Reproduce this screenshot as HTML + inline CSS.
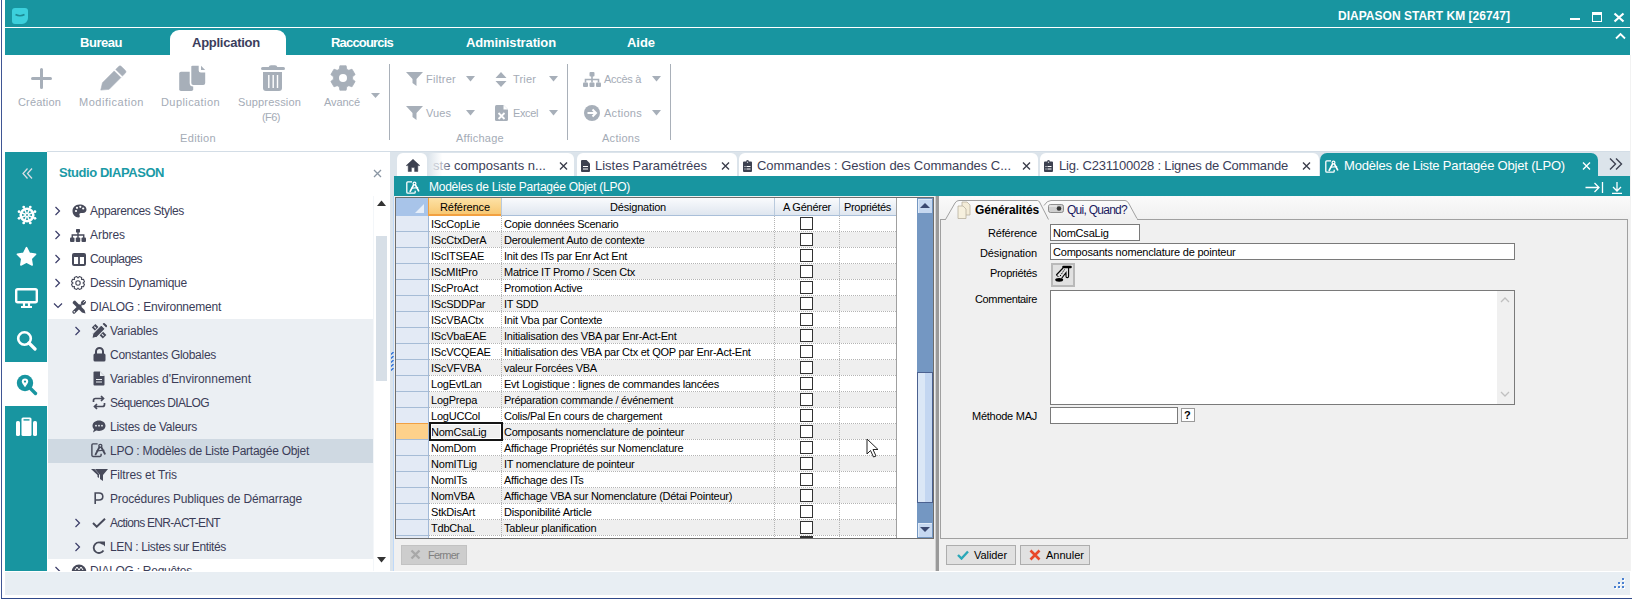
<!DOCTYPE html>
<html><head><meta charset="utf-8"><style>
html,body{margin:0;padding:0}
body{width:1632px;height:599px;overflow:hidden;position:relative;background:#fff;font-family:"Liberation Sans", sans-serif}
body>div,body>svg{position:absolute;white-space:pre}
</style></head><body>
<div style="left:1px;top:0px;width:1px;height:599px;background:#3f5694;"></div>
<div style="left:1px;top:598px;width:1631px;height:1px;background:#30498a;"></div>
<div style="left:5px;top:0px;width:1625px;height:27px;background:#1895a0;"></div>
<div style="left:5px;top:28px;width:1625px;height:27px;background:#1895a0;"></div>
<div style="left:12px;top:8px;width:16px;height:16px;background:#3cd0dc;border-radius:3px 3px 6px 3px"></div>
<svg style="left:14px;top:13px;" width="12" height="5" viewBox="0 0 12 5"><path d="M1.5 1.5 Q6 4 10.5 1.5" stroke="#1d8a94" stroke-width="1.6" fill="none"/></svg>
<div style="left:1338.00px;top:9px;font-size:12px;line-height:14px;font-weight:700;color:#fff;letter-spacing:0.016px;">DIAPASON START KM [26747]</div>
<div style="left:1570px;top:18px;width:10px;height:2px;background:#fff;"></div>
<div style="left:1592px;top:12px;width:8px;height:6px;border:1px solid #fff;border-top-width:3px"></div>
<svg style="left:1613px;top:12px;" width="12" height="11" viewBox="0 0 12 11"><path d="M1.5 1.5 L10.5 9.5 M10.5 1.5 L1.5 9.5" stroke="#fff" stroke-width="2.2"/></svg>
<svg style="left:1615px;top:32px;" width="12" height="8" viewBox="0 0 12 8"><path d="M1 6.5 L5.5 2 L10 6.5" stroke="#fff" stroke-width="1.8" fill="none"/></svg>
<div style="left:170px;top:30px;width:116px;height:25px;background:#fff;border-radius:9px 9px 0 0"></div>
<div style="left:80.00px;top:35px;font-size:13px;line-height:15px;font-weight:700;color:#fff;letter-spacing:-0.466px;">Bureau</div>
<div style="left:192.00px;top:35px;font-size:13px;line-height:15px;font-weight:700;color:#3b3d5c;letter-spacing:-0.253px;">Application</div>
<div style="left:331.00px;top:35px;font-size:13px;line-height:15px;font-weight:700;color:#fff;letter-spacing:-0.809px;">Raccourcis</div>
<div style="left:466.00px;top:35px;font-size:13px;line-height:15px;font-weight:700;color:#fff;letter-spacing:-0.124px;">Administration</div>
<div style="left:627.00px;top:35px;font-size:13px;line-height:15px;font-weight:700;color:#fff;letter-spacing:-0.043px;">Aide</div>
<svg style="left:31px;top:68px;" width="21" height="21" viewBox="0 0 21 21"><path d="M10.5 1.5 V19.5 M1.5 10.5 H19.5" stroke="#a7afb9" stroke-width="3" stroke-linecap="round"/></svg>
<div style="left:18.00px;top:96px;font-size:11px;line-height:12px;font-weight:400;color:#a4abb6;letter-spacing:0.178px;">Création</div>
<svg style="left:100px;top:64px;" width="28" height="28" viewBox="0 0 28 28"><g transform="translate(0.3 1.2) scale(0.94)"><path d="M0.5 26.5 L2.3 18.6 L14.8 6.1 L21.9 13.2 L9.4 25.7 Z M16.4 4.5 L19.6 1.3 Q21 0 22.4 1.3 L26.7 5.6 Q28 7 26.7 8.4 L23.5 11.6 Z" fill="#a7afb9" stroke="#a7afb9" stroke-width="0.6" stroke-linejoin="round"/></g></svg>
<div style="left:79.00px;top:96px;font-size:11px;line-height:12px;font-weight:400;color:#a4abb6;letter-spacing:0.525px;">Modification</div>
<svg style="left:178px;top:65px;" width="28" height="27" viewBox="0 0 28 27"><rect x="1.2" y="6.8" width="14" height="19.2" rx="1.8" fill="#a7afb9"/><path d="M14.5 0 H21.5 V5.5 Q21.5 6.8 22.8 6.8 H28 V18 Q28 20.8 25.2 20.8 H15.3 Q12.5 20.8 12.5 18 V2 Q12.5 0 14.5 0 Z" fill="#a7afb9" stroke="#fff" stroke-width="1.6"/><path d="M23 0.8 L27.2 5 H23 Z" fill="#a7afb9"/></svg>
<div style="left:161.00px;top:96px;font-size:11px;line-height:12px;font-weight:400;color:#a4abb6;letter-spacing:0.416px;">Duplication</div>
<svg style="left:261px;top:65px;" width="24" height="26" viewBox="0 0 24 26"><path d="M1.5 3.5 H22.5" stroke="#a7afb9" stroke-width="3" stroke-linecap="round"/><path d="M7.5 2.5 Q8 0.3 10 0.3 H14 Q16 0.3 16.5 2.5 Z" fill="#a7afb9"/><path d="M2 7 H21 V23 Q21 26 18 26 H5 Q2 26 2 23 Z" fill="#a7afb9"/><path d="M7.8 10 V23 M12.2 10 V23 M16.5 10 V23" stroke="#fff" stroke-width="1.4"/></svg>
<div style="left:238.00px;top:96px;font-size:11px;line-height:12px;font-weight:400;color:#a4abb6;letter-spacing:0.168px;">Suppression</div>
<div style="left:262.00px;top:111px;font-size:11px;line-height:12px;font-weight:400;color:#a4abb6;letter-spacing:-0.543px;">(F6)</div>
<svg style="left:330px;top:65px;" width="26" height="26" viewBox="0 0 26 26"><path d="M9.26 4.16 L9.88 0.79 L16.12 0.79 L16.74 4.16 L17.28 4.41 L17.80 4.69 L18.30 5.00 L18.79 5.34 L22.01 4.20 L25.13 9.60 L22.53 11.82 L22.58 12.41 L22.60 13.00 L22.58 13.59 L22.53 14.18 L25.13 16.40 L22.01 21.80 L18.79 20.66 L18.30 21.00 L17.80 21.31 L17.28 21.59 L16.74 21.84 L16.12 25.21 L9.88 25.21 L9.26 21.84 L8.72 21.59 L8.20 21.31 L7.70 21.00 L7.21 20.66 L3.99 21.80 L0.87 16.40 L3.47 14.18 L3.42 13.59 L3.40 13.00 L3.42 12.41 L3.47 11.82 L0.87 9.60 L3.99 4.20 L7.21 5.34 L7.70 5.00 L8.20 4.69 L8.72 4.41 Z" fill="#a7afb9" stroke="#a7afb9" stroke-width="0.8" stroke-linejoin="round"/><circle cx="13" cy="13" r="4" fill="#fff"/></svg>
<div style="left:324.00px;top:96px;font-size:11px;line-height:12px;font-weight:400;color:#a4abb6;letter-spacing:-0.083px;">Avancé</div>
<svg style="left:371px;top:93px;" width="10" height="5" viewBox="0 0 10 5"><path d="M0 0 H9 L4.5 5 Z" fill="#a7afb9"/></svg>
<div style="left:180.00px;top:132px;font-size:11px;line-height:12px;font-weight:400;color:#a4abb6;letter-spacing:0.337px;">Edition</div>
<div style="left:389px;top:64px;width:1px;height:76px;background:#a9b0b9;"></div>
<svg style="left:406px;top:72px;" width="17" height="14" viewBox="0 0 17 14"><path d="M0 0 H17 L10.5 7 V14 L6.5 11 V7 Z" fill="#a7afb9"/></svg>
<div style="left:426.00px;top:73px;font-size:11px;line-height:12px;font-weight:400;color:#a4abb6;letter-spacing:0.270px;">Filtrer</div>
<svg style="left:466px;top:76px;" width="10" height="6" viewBox="0 0 10 6"><path d="M0 0 H9 L4.5 5.5 Z" fill="#a7afb9"/></svg>
<svg style="left:495px;top:72px;" width="12" height="15" viewBox="0 0 12 15"><path d="M6 0 L11.5 6 H0.5 Z M6 15 L11.5 9 H0.5 Z" fill="#a7afb9"/></svg>
<div style="left:513.00px;top:73px;font-size:11px;line-height:12px;font-weight:400;color:#a4abb6;letter-spacing:0.159px;">Trier</div>
<svg style="left:549px;top:76px;" width="10" height="6" viewBox="0 0 10 6"><path d="M0 0 H9 L4.5 5.5 Z" fill="#a7afb9"/></svg>
<svg style="left:406px;top:106px;" width="17" height="14" viewBox="0 0 17 14"><path d="M0 0 H17 L10.5 7 V14 L6.5 11 V7 Z" fill="#a7afb9"/></svg>
<div style="left:426.00px;top:107px;font-size:11px;line-height:12px;font-weight:400;color:#a4abb6;letter-spacing:0.082px;">Vues</div>
<svg style="left:466px;top:110px;" width="10" height="6" viewBox="0 0 10 6"><path d="M0 0 H9 L4.5 5.5 Z" fill="#a7afb9"/></svg>
<svg style="left:495px;top:105px;" width="13" height="16" viewBox="0 0 13 16"><path d="M0 1.5 Q0 0 1.5 0 H8.5 L13 4.5 V14.5 Q13 16 11.5 16 H1.5 Q0 16 0 14.5 Z" fill="#a7afb9"/><path d="M8.5 0 V4.5 H13" fill="#fff"/><path d="M3.5 8 L9.5 14 M9.5 8 L3.5 14" stroke="#fff" stroke-width="1.8"/></svg>
<div style="left:513.00px;top:107px;font-size:11px;line-height:12px;font-weight:400;color:#a4abb6;letter-spacing:-0.381px;">Excel</div>
<svg style="left:549px;top:110px;" width="10" height="6" viewBox="0 0 10 6"><path d="M0 0 H9 L4.5 5.5 Z" fill="#a7afb9"/></svg>
<div style="left:456.00px;top:132px;font-size:11px;line-height:12px;font-weight:400;color:#a4abb6;letter-spacing:0.259px;">Affichage</div>
<div style="left:567px;top:64px;width:1px;height:76px;background:#a9b0b9;"></div>
<svg style="left:583px;top:72px;" width="18" height="15" viewBox="0 0 18 15"><rect x="6.5" y="0" width="5" height="4.5" rx="1" fill="#a7afb9"/><rect x="0" y="10.5" width="5" height="4.5" rx="1" fill="#a7afb9"/><rect x="6.5" y="10.5" width="5" height="4.5" rx="1" fill="#a7afb9"/><rect x="13" y="10.5" width="5" height="4.5" rx="1" fill="#a7afb9"/><path d="M9 4 V10.5 M2.5 10.5 V7.5 H15.5 V10.5" stroke="#a7afb9" stroke-width="1.6" fill="none"/></svg>
<div style="left:604.00px;top:73px;font-size:11px;line-height:12px;font-weight:400;color:#a4abb6;letter-spacing:-0.306px;">Accès à</div>
<svg style="left:652px;top:76px;" width="10" height="6" viewBox="0 0 10 6"><path d="M0 0 H9 L4.5 5.5 Z" fill="#a7afb9"/></svg>
<svg style="left:584px;top:105px;" width="16" height="16" viewBox="0 0 16 16"><circle cx="8" cy="8" r="8" fill="#a7afb9"/><path d="M3.5 8 H11.5 M8.5 4.5 L12 8 L8.5 11.5" stroke="#fff" stroke-width="2" fill="none"/></svg>
<div style="left:604.00px;top:107px;font-size:11px;line-height:12px;font-weight:400;color:#a4abb6;letter-spacing:0.275px;">Actions</div>
<svg style="left:652px;top:110px;" width="10" height="6" viewBox="0 0 10 6"><path d="M0 0 H9 L4.5 5.5 Z" fill="#a7afb9"/></svg>
<div style="left:602.00px;top:132px;font-size:11px;line-height:12px;font-weight:400;color:#a4abb6;letter-spacing:0.275px;">Actions</div>
<div style="left:670px;top:64px;width:1px;height:76px;background:#a9b0b9;"></div>
<div style="left:47px;top:151px;width:1583px;height:1px;background:#d3dde6;"></div>
<div style="left:5px;top:152px;width:42px;height:419px;background:#1895a0;"></div>
<div style="left:47px;top:152px;width:343px;height:419px;background:#fff;"></div>
<svg style="left:22px;top:168px;" width="11" height="11" viewBox="0 0 11 11"><path d="M5.5 0.5 L1 5.5 L5.5 10.5 M10 0.5 L5.5 5.5 L10 10.5" stroke="#d9dde3" stroke-width="1.3" fill="none"/></svg>
<svg style="left:17px;top:205px;" width="20" height="20" viewBox="0 0 20 20"><circle cx="10" cy="10" r="6.3" stroke="#fff" stroke-width="2.6" fill="none"/><circle cx="10" cy="10" r="2.3" fill="#fff"/><circle cx="10" cy="10" r="0.9" fill="#1895a0"/><line x1="11.85" y1="10.77" x2="16.01" y2="12.49" stroke="#fff" stroke-width="1.5"/><circle cx="17.95" cy="13.29" r="1.4" fill="#fff"/><line x1="10.77" y1="11.85" x2="12.49" y2="16.01" stroke="#fff" stroke-width="1.5"/><circle cx="13.29" cy="17.95" r="1.4" fill="#fff"/><line x1="9.23" y1="11.85" x2="7.51" y2="16.01" stroke="#fff" stroke-width="1.5"/><circle cx="6.71" cy="17.95" r="1.4" fill="#fff"/><line x1="8.15" y1="10.77" x2="3.99" y2="12.49" stroke="#fff" stroke-width="1.5"/><circle cx="2.05" cy="13.29" r="1.4" fill="#fff"/><line x1="8.15" y1="9.23" x2="3.99" y2="7.51" stroke="#fff" stroke-width="1.5"/><circle cx="2.05" cy="6.71" r="1.4" fill="#fff"/><line x1="9.23" y1="8.15" x2="7.51" y2="3.99" stroke="#fff" stroke-width="1.5"/><circle cx="6.71" cy="2.05" r="1.4" fill="#fff"/><line x1="10.77" y1="8.15" x2="12.49" y2="3.99" stroke="#fff" stroke-width="1.5"/><circle cx="13.29" cy="2.05" r="1.4" fill="#fff"/><line x1="11.85" y1="9.23" x2="16.01" y2="7.51" stroke="#fff" stroke-width="1.5"/><circle cx="17.95" cy="6.71" r="1.4" fill="#fff"/></svg>
<svg style="left:16px;top:246px;" width="21" height="22" viewBox="0 0 21 22"><path d="M10.50 1.60 L13.38 7.24 L19.63 8.23 L15.16 12.71 L16.14 18.97 L10.50 16.10 L4.86 18.97 L5.84 12.71 L1.37 8.23 L7.62 7.24 Z" fill="#fff" stroke="#fff" stroke-width="1.6" stroke-linejoin="round"/></svg>
<svg style="left:15px;top:288px;" width="23" height="20" viewBox="0 0 23 20"><rect x="1.2" y="1.2" width="20.6" height="13" rx="1.5" stroke="#fff" stroke-width="2.4" fill="none"/><path d="M9 15 V18 M14 15 V18 M6 19 H17" stroke="#fff" stroke-width="2.2"/></svg>
<svg style="left:16px;top:330px;" width="21" height="21" viewBox="0 0 21 21"><circle cx="8.5" cy="8.5" r="6.3" stroke="#fff" stroke-width="2.6" fill="none"/><path d="M13 13 L19 19" stroke="#fff" stroke-width="3.2" stroke-linecap="round"/></svg>
<div style="left:5px;top:362px;width:42px;height:44px;background:#fff;"></div>
<svg style="left:15px;top:373px;" width="23" height="23" viewBox="0 0 23 23"><circle cx="10" cy="10" r="8.2" fill="#1895a0"/><path d="M15.5 15.5 L20.5 20.5" stroke="#1895a0" stroke-width="3.4" stroke-linecap="round"/><path d="M10 14.2 Q6.8 10.5 6.8 8.6 A3.2 3.2 0 0 1 13.2 8.6 Q13.2 10.5 10 14.2 Z" fill="#fff"/><circle cx="10" cy="8.6" r="1.1" fill="#1895a0"/></svg>
<svg style="left:16px;top:417px;" width="21" height="19" viewBox="0 0 21 19"><rect x="0" y="4" width="4" height="15" rx="1.6" fill="#fff"/><rect x="17" y="4" width="4" height="15" rx="1.6" fill="#fff"/><rect x="5.5" y="0.5" width="10" height="18.5" rx="1.5" fill="#fff"/><rect x="7.5" y="2.2" width="6" height="1.4" fill="#1895a0"/></svg>
<div style="left:59.00px;top:165px;font-size:13px;line-height:15px;font-weight:700;color:#1a9aa6;letter-spacing:-0.447px;">Studio DIAPASON</div>
<svg style="left:373px;top:169px;" width="9" height="9" viewBox="0 0 9 9"><path d="M1 1 L8 8 M8 1 L1 8" stroke="#8a96a3" stroke-width="1.3"/></svg>
<div style="left:48px;top:319px;width:325px;height:240px;background:#ebeff3;"></div>
<div style="left:48px;top:439px;width:325px;height:24px;background:#cfd9e2;"></div>
<svg style="left:54px;top:206px;" width="7" height="10" viewBox="0 0 7 10"><path d="M1.5 1 L5.5 5 L1.5 9" stroke="#3a3c68" stroke-width="1.2" fill="none"/></svg>
<div style="left:90.00px;top:204px;font-size:12px;line-height:14px;font-weight:400;color:#3b3d58;letter-spacing:-0.357px;">Apparences Styles</div>
<svg style="left:54px;top:230px;" width="7" height="10" viewBox="0 0 7 10"><path d="M1.5 1 L5.5 5 L1.5 9" stroke="#3a3c68" stroke-width="1.2" fill="none"/></svg>
<div style="left:90.00px;top:228px;font-size:12px;line-height:14px;font-weight:400;color:#3b3d58;letter-spacing:-0.057px;">Arbres</div>
<svg style="left:54px;top:254px;" width="7" height="10" viewBox="0 0 7 10"><path d="M1.5 1 L5.5 5 L1.5 9" stroke="#3a3c68" stroke-width="1.2" fill="none"/></svg>
<div style="left:90.00px;top:252px;font-size:12px;line-height:14px;font-weight:400;color:#3b3d58;letter-spacing:-0.597px;">Couplages</div>
<svg style="left:54px;top:278px;" width="7" height="10" viewBox="0 0 7 10"><path d="M1.5 1 L5.5 5 L1.5 9" stroke="#3a3c68" stroke-width="1.2" fill="none"/></svg>
<div style="left:90.00px;top:276px;font-size:12px;line-height:14px;font-weight:400;color:#3b3d58;letter-spacing:-0.232px;">Dessin Dynamique</div>
<svg style="left:53px;top:302px;" width="10" height="7" viewBox="0 0 10 7"><path d="M1 1.5 L5 5.5 L9 1.5" stroke="#3a3c68" stroke-width="1.2" fill="none"/></svg>
<div style="left:90.00px;top:300px;font-size:12px;line-height:14px;font-weight:400;color:#3b3d58;letter-spacing:-0.230px;">DIALOG : Environnement</div>
<svg style="left:74px;top:326px;" width="7" height="10" viewBox="0 0 7 10"><path d="M1.5 1 L5.5 5 L1.5 9" stroke="#3a3c68" stroke-width="1.2" fill="none"/></svg>
<div style="left:110.00px;top:324px;font-size:12px;line-height:14px;font-weight:400;color:#3b3d58;letter-spacing:-0.127px;">Variables</div>
<div style="left:110.00px;top:348px;font-size:12px;line-height:14px;font-weight:400;color:#3b3d58;letter-spacing:-0.285px;">Constantes Globales</div>
<div style="left:110.00px;top:372px;font-size:12px;line-height:14px;font-weight:400;color:#3b3d58;letter-spacing:-0.046px;">Variables d'Environnement</div>
<div style="left:110.00px;top:396px;font-size:12px;line-height:14px;font-weight:400;color:#3b3d58;letter-spacing:-0.608px;">Séquences DIALOG</div>
<div style="left:110.00px;top:420px;font-size:12px;line-height:14px;font-weight:400;color:#3b3d58;letter-spacing:-0.245px;">Listes de Valeurs</div>
<div style="left:110.00px;top:444px;font-size:12px;line-height:14px;font-weight:400;color:#3b3d58;letter-spacing:-0.265px;">LPO : Modèles de Liste Partagée Objet</div>
<div style="left:110.00px;top:468px;font-size:12px;line-height:14px;font-weight:400;color:#3b3d58;letter-spacing:-0.111px;">Filtres et Tris</div>
<div style="left:110.00px;top:492px;font-size:12px;line-height:14px;font-weight:400;color:#3b3d58;letter-spacing:-0.165px;">Procédures Publiques de Démarrage</div>
<svg style="left:74px;top:518px;" width="7" height="10" viewBox="0 0 7 10"><path d="M1.5 1 L5.5 5 L1.5 9" stroke="#3a3c68" stroke-width="1.2" fill="none"/></svg>
<div style="left:110.00px;top:516px;font-size:12px;line-height:14px;font-weight:400;color:#3b3d58;letter-spacing:-0.703px;">Actions ENR-ACT-ENT</div>
<svg style="left:74px;top:542px;" width="7" height="10" viewBox="0 0 7 10"><path d="M1.5 1 L5.5 5 L1.5 9" stroke="#3a3c68" stroke-width="1.2" fill="none"/></svg>
<div style="left:110.00px;top:540px;font-size:12px;line-height:14px;font-weight:400;color:#3b3d58;letter-spacing:-0.363px;">LEN : Listes sur Entités</div>
<svg style="left:54px;top:566px;" width="7" height="10" viewBox="0 0 7 10"><path d="M1.5 1 L5.5 5 L1.5 9" stroke="#3a3c68" stroke-width="1.2" fill="none"/></svg>
<div style="left:90.00px;top:564px;font-size:12px;line-height:14px;font-weight:400;color:#3b3d58;letter-spacing:-0.278px;">DIALOG : Requêtes</div>
<div style="left:373px;top:196px;width:17px;height:375px;background:#fff;box-shadow:inset 1px 0 0 #f3f6f9"></div>
<svg style="left:377px;top:200px;" width="9" height="6" viewBox="0 0 9 6"><path d="M0 6 L4.5 0.5 L9 6 Z" fill="#333"/></svg>
<div style="left:376px;top:236px;width:11px;height:145px;background:#d7dfe7;"></div>
<svg style="left:377px;top:557px;" width="9" height="6" viewBox="0 0 9 6"><path d="M0 0 H9 L4.5 5.5 Z" fill="#333"/></svg>
<div style="left:390px;top:152px;width:4px;height:419px;background:#dce4eb;"></div>
<div style="left:393px;top:196px;width:1px;height:375px;background:#bfd9f8;"></div>
<svg style="left:391px;top:352px;" width="3" height="3" viewBox="0 0 3 3"><path d="M0 2.5 L2.5 0" stroke="#2d6fd6" stroke-width="1.3"/></svg>
<svg style="left:391px;top:356px;" width="3" height="3" viewBox="0 0 3 3"><path d="M0 2.5 L2.5 0" stroke="#2d6fd6" stroke-width="1.3"/></svg>
<svg style="left:391px;top:360px;" width="3" height="3" viewBox="0 0 3 3"><path d="M0 2.5 L2.5 0" stroke="#2d6fd6" stroke-width="1.3"/></svg>
<svg style="left:391px;top:364px;" width="3" height="3" viewBox="0 0 3 3"><path d="M0 2.5 L2.5 0" stroke="#2d6fd6" stroke-width="1.3"/></svg>
<svg style="left:391px;top:368px;" width="3" height="3" viewBox="0 0 3 3"><path d="M0 2.5 L2.5 0" stroke="#2d6fd6" stroke-width="1.3"/></svg>
<div style="left:394px;top:152px;width:1236px;height:24px;background:#dce4eb;"></div>
<div style="left:397px;top:153px;width:30px;height:23px;background:#fff;border-radius:6px 6px 0 0"></div>
<svg style="left:406px;top:159px;" width="14" height="13" viewBox="0 0 14 13"><path d="M7 0.3 L13.8 6.6 H11.8 V12.5 H8.6 V8.6 H5.4 V12.5 H2.2 V6.6 H0.2 Z" fill="#3d4150" stroke="#3d4150" stroke-width="0.5" stroke-linejoin="round"/></svg>
<div style="left:428px;top:153px;width:146px;height:23px;background:#fff;border-radius:6px 6px 0 0"></div>
<div style="left:433.00px;top:158px;font-size:13px;line-height:15px;font-weight:400;color:#3c3e58;letter-spacing:0.014px;">ste composants n...</div>
<div style="left:428px;top:153px;width:24px;height:23px;background:linear-gradient(90deg,#dce4eb,rgba(255,255,255,0.6) 60%,rgba(255,255,255,0))"></div>
<svg style="left:559px;top:162px;" width="9" height="8" viewBox="0 0 9 8"><path d="M1 0.5 L8 7.5 M8 0.5 L1 7.5" stroke="#3a3d4a" stroke-width="1.35"/></svg>
<div style="left:577px;top:153px;width:160px;height:23px;background:#fff;border-radius:6px 6px 0 0"></div>
<svg style="left:581px;top:160px;" width="9" height="12" viewBox="0 0 9 12"><path d="M0 1 Q0 0 1 0 H5.5 L9 3.5 V11 Q9 12 8 12 H1 Q0 12 0 11 Z" fill="#3d4150"/><path d="M2 6.5 H7 M2 9 H7" stroke="#fff" stroke-width="1"/></svg>
<div style="left:595.00px;top:158px;font-size:13px;line-height:15px;font-weight:400;color:#3c3e58;letter-spacing:0.000px;">Listes Paramétrées</div>
<svg style="left:721px;top:162px;" width="9" height="8" viewBox="0 0 9 8"><path d="M1 0.5 L8 7.5 M8 0.5 L1 7.5" stroke="#3a3d4a" stroke-width="1.35"/></svg>
<div style="left:739px;top:153px;width:299px;height:23px;background:#fff;border-radius:6px 6px 0 0"></div>
<svg style="left:743px;top:160px;" width="9" height="12" viewBox="0 0 9 12"><path d="M0 2.5 Q0 1.5 1 1.5 H3 Q3 0 4.5 0 Q6 0 6 1.5 H8 Q9 1.5 9 2.5 V11 Q9 12 8 12 H1 Q0 12 0 11 Z" fill="#3d4150"/><path d="M3.5 1.7 H5.5 L4.5 3 Z" fill="#fff"/><path d="M3.5 6.5 H7.5 M3.5 9 H7.5" stroke="#fff" stroke-width="1"/><rect x="1.5" y="6" width="1" height="1" fill="#fff"/><rect x="1.5" y="8.5" width="1" height="1" fill="#fff"/></svg>
<div style="left:757.00px;top:158px;font-size:13px;line-height:15px;font-weight:400;color:#3c3e58;letter-spacing:-0.028px;">Commandes : Gestion des Commandes C...</div>
<svg style="left:1022px;top:162px;" width="9" height="8" viewBox="0 0 9 8"><path d="M1 0.5 L8 7.5 M8 0.5 L1 7.5" stroke="#3a3d4a" stroke-width="1.35"/></svg>
<div style="left:1040px;top:153px;width:279px;height:23px;background:#fff;border-radius:6px 6px 0 0"></div>
<svg style="left:1044px;top:160px;" width="9" height="12" viewBox="0 0 9 12"><path d="M0 2.5 Q0 1.5 1 1.5 H3 Q3 0 4.5 0 Q6 0 6 1.5 H8 Q9 1.5 9 2.5 V11 Q9 12 8 12 H1 Q0 12 0 11 Z" fill="#3d4150"/><path d="M3.5 1.7 H5.5 L4.5 3 Z" fill="#fff"/><path d="M3.5 6.5 H7.5 M3.5 9 H7.5" stroke="#fff" stroke-width="1"/><rect x="1.5" y="6" width="1" height="1" fill="#fff"/><rect x="1.5" y="8.5" width="1" height="1" fill="#fff"/></svg>
<div style="left:1059.00px;top:158px;font-size:13px;line-height:15px;font-weight:400;color:#3c3e58;letter-spacing:-0.197px;">Lig. C231100028 : Lignes de Commande</div>
<svg style="left:1302px;top:162px;" width="9" height="8" viewBox="0 0 9 8"><path d="M1 0.5 L8 7.5 M8 0.5 L1 7.5" stroke="#3a3d4a" stroke-width="1.35"/></svg>
<div style="left:1320px;top:153px;width:278px;height:23px;background:#1895a0;border-radius:7px 7px 0 0"></div>
<svg style="left:1325px;top:160px;" width="15" height="14" viewBox="0 0 15 14"><g transform="scale(1.0)"><path d="M6 0.8 H1.8 Q0.8 0.8 0.8 1.8 V11.2 Q0.8 12.2 1.8 12.2 H8.2 Q9.2 12.2 9.2 11.2 V9.8" stroke="#fff" stroke-width="1.3" fill="none"/><circle cx="8.5" cy="2.6" r="1.4" stroke="#fff" stroke-width="1.2" fill="none"/><path d="M7.6 3.9 L4.2 10.3 M9.4 3.9 L12.6 9.8" stroke="#fff" stroke-width="1.7" fill="none" stroke-linecap="round"/><path d="M5 7.2 L12.2 6.6" stroke="#fff" stroke-width="1.1"/></g></svg>
<div style="left:1344.00px;top:158px;font-size:13px;line-height:15px;font-weight:400;color:#fff;letter-spacing:-0.179px;">Modèles de Liste Partagée Objet (LPO)</div>
<svg style="left:1582px;top:162px;" width="9" height="8" viewBox="0 0 9 8"><path d="M1 0.5 L8 7.5 M8 0.5 L1 7.5" stroke="#fff" stroke-width="1.35"/></svg>
<svg style="left:1609px;top:158px;" width="14" height="12" viewBox="0 0 14 12"><path d="M1 0.5 L6.5 6 L1 11.5 M7 0.5 L12.5 6 L7 11.5" stroke="#3d4150" stroke-width="1.4" fill="none"/></svg>
<div style="left:394px;top:176px;width:1236px;height:20px;background:#1895a0;"></div>
<svg style="left:406px;top:181px;" width="15" height="14" viewBox="0 0 15 14"><g transform="scale(1.0)"><path d="M6 0.8 H1.8 Q0.8 0.8 0.8 1.8 V11.2 Q0.8 12.2 1.8 12.2 H8.2 Q9.2 12.2 9.2 11.2 V9.8" stroke="#fff" stroke-width="1.3" fill="none"/><circle cx="8.5" cy="2.6" r="1.4" stroke="#fff" stroke-width="1.2" fill="none"/><path d="M7.6 3.9 L4.2 10.3 M9.4 3.9 L12.6 9.8" stroke="#fff" stroke-width="1.7" fill="none" stroke-linecap="round"/><path d="M5 7.2 L12.2 6.6" stroke="#fff" stroke-width="1.1"/></g></svg>
<div style="left:429.00px;top:180px;font-size:12px;line-height:14px;font-weight:400;color:#fff;letter-spacing:-0.247px;">Modèles de Liste Partagée Objet (LPO)</div>
<svg style="left:1585px;top:182px;" width="19" height="11" viewBox="0 0 19 11"><path d="M0.5 5.5 H14 M9.5 1 L14 5.5 L9.5 10 M17.5 0 V11" stroke="#fff" stroke-width="1.3" fill="none"/></svg>
<svg style="left:1611px;top:182px;" width="12" height="12" viewBox="0 0 12 12"><path d="M6 0 V9 M2 5 L6 9 L10 5 M1 11.5 H11" stroke="#fff" stroke-width="1.3" fill="none"/></svg>
<div style="left:394px;top:196px;width:541px;height:375px;background:#f0f0f0;"></div>
<div style="left:395px;top:197px;width:539px;height:342px;background:#fff;box-sizing:border-box;border:1px solid #6d6d6d"></div>
<div style="left:396px;top:198px;width:32px;height:18px;background:#a8c4e9;"></div>
<svg style="left:415px;top:204px;" width="9" height="9" viewBox="0 0 9 9"><path d="M9 0 V9 H0 Z" fill="#e6eef9"/></svg>
<div style="left:428px;top:198px;width:73px;height:18px;box-sizing:border-box;background:linear-gradient(#fde2a6,#f8c873);border-left:1px solid #f2a040;border-bottom:2px solid #f2a040"></div>
<div style="left:501px;top:198px;width:273px;height:18px;box-sizing:border-box;background:linear-gradient(#fafbfd,#dfe6ef);border-left:1px solid #b9cadd;border-bottom:1px solid #a9bfd9"></div>
<div style="left:774px;top:198px;width:65px;height:18px;box-sizing:border-box;background:linear-gradient(#fafbfd,#dfe6ef);border-left:1px solid #b9cadd;border-bottom:1px solid #a9bfd9"></div>
<div style="left:839px;top:198px;width:58px;height:18px;box-sizing:border-box;background:linear-gradient(#fafbfd,#dfe6ef);border-left:1px solid #b9cadd;border-bottom:1px solid #a9bfd9"></div>
<div style="left:896px;top:198px;width:1px;height:340px;background:#a0a0a0"></div>
<div style="left:440.00px;top:201px;font-size:11px;line-height:12px;font-weight:400;color:#000;letter-spacing:-0.085px;">Référence</div>
<div style="left:610.00px;top:201px;font-size:11px;line-height:12px;font-weight:400;color:#000;letter-spacing:-0.190px;">Désignation</div>
<div style="left:783.00px;top:201px;font-size:11px;line-height:12px;font-weight:400;color:#000;letter-spacing:-0.238px;">A Générer</div>
<div style="left:844.00px;top:201px;font-size:11px;line-height:12px;font-weight:400;color:#000;letter-spacing:-0.314px;">Propriétés</div>
<div style="left:429px;top:216px;width:467px;height:15px;background:#ffffff;"></div>
<div style="left:396px;top:216px;width:32px;height:15px;background:#e3eaf5;"></div>
<div style="left:396px;top:231px;width:32px;height:1px;background:#a6bcd6;"></div>
<div style="left:429px;top:231px;width:467px;height:1px;background:repeating-linear-gradient(90deg,#b4b4b4 0 1px,transparent 1px 2px);"></div>
<div style="left:429px;top:232px;width:467px;height:15px;background:#efefef;"></div>
<div style="left:396px;top:232px;width:32px;height:15px;background:#e3eaf5;"></div>
<div style="left:396px;top:247px;width:32px;height:1px;background:#a6bcd6;"></div>
<div style="left:429px;top:247px;width:467px;height:1px;background:repeating-linear-gradient(90deg,#b4b4b4 0 1px,transparent 1px 2px);"></div>
<div style="left:429px;top:248px;width:467px;height:15px;background:#ffffff;"></div>
<div style="left:396px;top:248px;width:32px;height:15px;background:#e3eaf5;"></div>
<div style="left:396px;top:263px;width:32px;height:1px;background:#a6bcd6;"></div>
<div style="left:429px;top:263px;width:467px;height:1px;background:repeating-linear-gradient(90deg,#b4b4b4 0 1px,transparent 1px 2px);"></div>
<div style="left:429px;top:264px;width:467px;height:15px;background:#efefef;"></div>
<div style="left:396px;top:264px;width:32px;height:15px;background:#e3eaf5;"></div>
<div style="left:396px;top:279px;width:32px;height:1px;background:#a6bcd6;"></div>
<div style="left:429px;top:279px;width:467px;height:1px;background:repeating-linear-gradient(90deg,#b4b4b4 0 1px,transparent 1px 2px);"></div>
<div style="left:429px;top:280px;width:467px;height:15px;background:#ffffff;"></div>
<div style="left:396px;top:280px;width:32px;height:15px;background:#e3eaf5;"></div>
<div style="left:396px;top:295px;width:32px;height:1px;background:#a6bcd6;"></div>
<div style="left:429px;top:295px;width:467px;height:1px;background:repeating-linear-gradient(90deg,#b4b4b4 0 1px,transparent 1px 2px);"></div>
<div style="left:429px;top:296px;width:467px;height:15px;background:#efefef;"></div>
<div style="left:396px;top:296px;width:32px;height:15px;background:#e3eaf5;"></div>
<div style="left:396px;top:311px;width:32px;height:1px;background:#a6bcd6;"></div>
<div style="left:429px;top:311px;width:467px;height:1px;background:repeating-linear-gradient(90deg,#b4b4b4 0 1px,transparent 1px 2px);"></div>
<div style="left:429px;top:312px;width:467px;height:15px;background:#ffffff;"></div>
<div style="left:396px;top:312px;width:32px;height:15px;background:#e3eaf5;"></div>
<div style="left:396px;top:327px;width:32px;height:1px;background:#a6bcd6;"></div>
<div style="left:429px;top:327px;width:467px;height:1px;background:repeating-linear-gradient(90deg,#b4b4b4 0 1px,transparent 1px 2px);"></div>
<div style="left:429px;top:328px;width:467px;height:15px;background:#efefef;"></div>
<div style="left:396px;top:328px;width:32px;height:15px;background:#e3eaf5;"></div>
<div style="left:396px;top:343px;width:32px;height:1px;background:#a6bcd6;"></div>
<div style="left:429px;top:343px;width:467px;height:1px;background:repeating-linear-gradient(90deg,#b4b4b4 0 1px,transparent 1px 2px);"></div>
<div style="left:429px;top:344px;width:467px;height:15px;background:#ffffff;"></div>
<div style="left:396px;top:344px;width:32px;height:15px;background:#e3eaf5;"></div>
<div style="left:396px;top:359px;width:32px;height:1px;background:#a6bcd6;"></div>
<div style="left:429px;top:359px;width:467px;height:1px;background:repeating-linear-gradient(90deg,#b4b4b4 0 1px,transparent 1px 2px);"></div>
<div style="left:429px;top:360px;width:467px;height:15px;background:#efefef;"></div>
<div style="left:396px;top:360px;width:32px;height:15px;background:#e3eaf5;"></div>
<div style="left:396px;top:375px;width:32px;height:1px;background:#a6bcd6;"></div>
<div style="left:429px;top:375px;width:467px;height:1px;background:repeating-linear-gradient(90deg,#b4b4b4 0 1px,transparent 1px 2px);"></div>
<div style="left:429px;top:376px;width:467px;height:15px;background:#ffffff;"></div>
<div style="left:396px;top:376px;width:32px;height:15px;background:#e3eaf5;"></div>
<div style="left:396px;top:391px;width:32px;height:1px;background:#a6bcd6;"></div>
<div style="left:429px;top:391px;width:467px;height:1px;background:repeating-linear-gradient(90deg,#b4b4b4 0 1px,transparent 1px 2px);"></div>
<div style="left:429px;top:392px;width:467px;height:15px;background:#efefef;"></div>
<div style="left:396px;top:392px;width:32px;height:15px;background:#e3eaf5;"></div>
<div style="left:396px;top:407px;width:32px;height:1px;background:#a6bcd6;"></div>
<div style="left:429px;top:407px;width:467px;height:1px;background:repeating-linear-gradient(90deg,#b4b4b4 0 1px,transparent 1px 2px);"></div>
<div style="left:429px;top:408px;width:467px;height:15px;background:#ffffff;"></div>
<div style="left:396px;top:408px;width:32px;height:15px;background:#e3eaf5;"></div>
<div style="left:396px;top:423px;width:32px;height:1px;background:#a6bcd6;"></div>
<div style="left:429px;top:423px;width:467px;height:1px;background:repeating-linear-gradient(90deg,#b4b4b4 0 1px,transparent 1px 2px);"></div>
<div style="left:429px;top:424px;width:467px;height:15px;background:#efefef;"></div>
<div style="left:396px;top:424px;width:32px;height:15px;background:#e3eaf5;"></div>
<div style="left:396px;top:439px;width:32px;height:1px;background:#a6bcd6;"></div>
<div style="left:429px;top:439px;width:467px;height:1px;background:repeating-linear-gradient(90deg,#b4b4b4 0 1px,transparent 1px 2px);"></div>
<div style="left:429px;top:440px;width:467px;height:15px;background:#ffffff;"></div>
<div style="left:396px;top:440px;width:32px;height:15px;background:#e3eaf5;"></div>
<div style="left:396px;top:455px;width:32px;height:1px;background:#a6bcd6;"></div>
<div style="left:429px;top:455px;width:467px;height:1px;background:repeating-linear-gradient(90deg,#b4b4b4 0 1px,transparent 1px 2px);"></div>
<div style="left:429px;top:456px;width:467px;height:15px;background:#efefef;"></div>
<div style="left:396px;top:456px;width:32px;height:15px;background:#e3eaf5;"></div>
<div style="left:396px;top:471px;width:32px;height:1px;background:#a6bcd6;"></div>
<div style="left:429px;top:471px;width:467px;height:1px;background:repeating-linear-gradient(90deg,#b4b4b4 0 1px,transparent 1px 2px);"></div>
<div style="left:429px;top:472px;width:467px;height:15px;background:#ffffff;"></div>
<div style="left:396px;top:472px;width:32px;height:15px;background:#e3eaf5;"></div>
<div style="left:396px;top:487px;width:32px;height:1px;background:#a6bcd6;"></div>
<div style="left:429px;top:487px;width:467px;height:1px;background:repeating-linear-gradient(90deg,#b4b4b4 0 1px,transparent 1px 2px);"></div>
<div style="left:429px;top:488px;width:467px;height:15px;background:#efefef;"></div>
<div style="left:396px;top:488px;width:32px;height:15px;background:#e3eaf5;"></div>
<div style="left:396px;top:503px;width:32px;height:1px;background:#a6bcd6;"></div>
<div style="left:429px;top:503px;width:467px;height:1px;background:repeating-linear-gradient(90deg,#b4b4b4 0 1px,transparent 1px 2px);"></div>
<div style="left:429px;top:504px;width:467px;height:15px;background:#ffffff;"></div>
<div style="left:396px;top:504px;width:32px;height:15px;background:#e3eaf5;"></div>
<div style="left:396px;top:519px;width:32px;height:1px;background:#a6bcd6;"></div>
<div style="left:429px;top:519px;width:467px;height:1px;background:repeating-linear-gradient(90deg,#b4b4b4 0 1px,transparent 1px 2px);"></div>
<div style="left:429px;top:520px;width:467px;height:15px;background:#efefef;"></div>
<div style="left:396px;top:520px;width:32px;height:15px;background:#e3eaf5;"></div>
<div style="left:396px;top:535px;width:32px;height:1px;background:#a6bcd6;"></div>
<div style="left:429px;top:535px;width:467px;height:1px;background:repeating-linear-gradient(90deg,#b4b4b4 0 1px,transparent 1px 2px);"></div>
<div style="left:429px;top:536px;width:467px;height:2px;background:#ffffff;"></div>
<div style="left:396px;top:536px;width:32px;height:2px;background:#e3eaf5;"></div>
<div style="left:428px;top:216px;width:1px;height:322px;background:#a2b9d7;"></div>
<div style="left:501px;top:216px;width:1px;height:322px;background:repeating-linear-gradient(180deg,#b4b4b4 0 1px,transparent 1px 2px);"></div>
<div style="left:774px;top:216px;width:1px;height:322px;background:repeating-linear-gradient(180deg,#b4b4b4 0 1px,transparent 1px 2px);"></div>
<div style="left:839px;top:216px;width:1px;height:322px;background:repeating-linear-gradient(180deg,#b4b4b4 0 1px,transparent 1px 2px);"></div>
<div style="left:431.00px;top:218px;font-size:11px;line-height:12px;font-weight:400;color:#000;letter-spacing:-0.197px;">IScCopLie</div>
<div style="left:504.00px;top:218px;font-size:11px;line-height:12px;font-weight:400;color:#000;letter-spacing:-0.274px;">Copie données Scenario</div>
<div style="left:800px;top:217px;width:13px;height:13px;background:#fff;box-sizing:border-box;border:1.5px solid #333"></div>
<div style="left:431.00px;top:234px;font-size:11px;line-height:12px;font-weight:400;color:#000;letter-spacing:-0.201px;">IScCtxDerA</div>
<div style="left:504.00px;top:234px;font-size:11px;line-height:12px;font-weight:400;color:#000;letter-spacing:-0.264px;">Deroulement Auto de contexte</div>
<div style="left:800px;top:233px;width:13px;height:13px;background:#fff;box-sizing:border-box;border:1.5px solid #333"></div>
<div style="left:431.00px;top:250px;font-size:11px;line-height:12px;font-weight:400;color:#000;letter-spacing:-0.214px;">IScITSEAE</div>
<div style="left:504.00px;top:250px;font-size:11px;line-height:12px;font-weight:400;color:#000;letter-spacing:-0.231px;">Init des ITs par Enr Act Ent</div>
<div style="left:800px;top:249px;width:13px;height:13px;background:#fff;box-sizing:border-box;border:1.5px solid #333"></div>
<div style="left:431.00px;top:266px;font-size:11px;line-height:12px;font-weight:400;color:#000;letter-spacing:-0.188px;">IScMItPro</div>
<div style="left:504.00px;top:266px;font-size:11px;line-height:12px;font-weight:400;color:#000;letter-spacing:-0.255px;">Matrice IT Promo / Scen Ctx</div>
<div style="left:800px;top:265px;width:13px;height:13px;background:#fff;box-sizing:border-box;border:1.5px solid #333"></div>
<div style="left:431.00px;top:282px;font-size:11px;line-height:12px;font-weight:400;color:#000;letter-spacing:-0.190px;">IScProAct</div>
<div style="left:504.00px;top:282px;font-size:11px;line-height:12px;font-weight:400;color:#000;letter-spacing:-0.258px;">Promotion Active</div>
<div style="left:800px;top:281px;width:13px;height:13px;background:#fff;box-sizing:border-box;border:1.5px solid #333"></div>
<div style="left:431.00px;top:298px;font-size:11px;line-height:12px;font-weight:400;color:#000;letter-spacing:-0.219px;">IScSDDPar</div>
<div style="left:504.00px;top:298px;font-size:11px;line-height:12px;font-weight:400;color:#000;letter-spacing:-0.299px;">IT SDD</div>
<div style="left:800px;top:297px;width:13px;height:13px;background:#fff;box-sizing:border-box;border:1.5px solid #333"></div>
<div style="left:431.00px;top:314px;font-size:11px;line-height:12px;font-weight:400;color:#000;letter-spacing:-0.212px;">IScVBACtx</div>
<div style="left:504.00px;top:314px;font-size:11px;line-height:12px;font-weight:400;color:#000;letter-spacing:-0.246px;">Init Vba par Contexte</div>
<div style="left:800px;top:313px;width:13px;height:13px;background:#fff;box-sizing:border-box;border:1.5px solid #333"></div>
<div style="left:431.00px;top:330px;font-size:11px;line-height:12px;font-weight:400;color:#000;letter-spacing:-0.224px;">IScVbaEAE</div>
<div style="left:504.00px;top:330px;font-size:11px;line-height:12px;font-weight:400;color:#000;letter-spacing:-0.239px;">Initialisation des VBA par Enr-Act-Ent</div>
<div style="left:800px;top:329px;width:13px;height:13px;background:#fff;box-sizing:border-box;border:1.5px solid #333"></div>
<div style="left:431.00px;top:346px;font-size:11px;line-height:12px;font-weight:400;color:#000;letter-spacing:-0.240px;">IScVCQEAE</div>
<div style="left:504.00px;top:346px;font-size:11px;line-height:12px;font-weight:400;color:#000;letter-spacing:-0.245px;">Initialisation des VBA par Ctx et QOP par Enr-Act-Ent</div>
<div style="left:800px;top:345px;width:13px;height:13px;background:#fff;box-sizing:border-box;border:1.5px solid #333"></div>
<div style="left:431.00px;top:362px;font-size:11px;line-height:12px;font-weight:400;color:#000;letter-spacing:-0.227px;">IScVFVBA</div>
<div style="left:504.00px;top:362px;font-size:11px;line-height:12px;font-weight:400;color:#000;letter-spacing:-0.272px;">valeur Forcées VBA</div>
<div style="left:800px;top:361px;width:13px;height:13px;background:#fff;box-sizing:border-box;border:1.5px solid #333"></div>
<div style="left:431.00px;top:378px;font-size:11px;line-height:12px;font-weight:400;color:#000;letter-spacing:-0.205px;">LogEvtLan</div>
<div style="left:504.00px;top:378px;font-size:11px;line-height:12px;font-weight:400;color:#000;letter-spacing:-0.257px;">Evt Logistique : lignes de commandes lancées</div>
<div style="left:800px;top:377px;width:13px;height:13px;background:#fff;box-sizing:border-box;border:1.5px solid #333"></div>
<div style="left:431.00px;top:394px;font-size:11px;line-height:12px;font-weight:400;color:#000;letter-spacing:-0.209px;">LogPrepa</div>
<div style="left:504.00px;top:394px;font-size:11px;line-height:12px;font-weight:400;color:#000;letter-spacing:-0.278px;">Préparation commande / événement</div>
<div style="left:800px;top:393px;width:13px;height:13px;background:#fff;box-sizing:border-box;border:1.5px solid #333"></div>
<div style="left:431.00px;top:410px;font-size:11px;line-height:12px;font-weight:400;color:#000;letter-spacing:-0.222px;">LogUCCol</div>
<div style="left:504.00px;top:410px;font-size:11px;line-height:12px;font-weight:400;color:#000;letter-spacing:-0.260px;">Colis/Pal En cours de chargement</div>
<div style="left:800px;top:409px;width:13px;height:13px;background:#fff;box-sizing:border-box;border:1.5px solid #333"></div>
<div style="left:431.00px;top:426px;font-size:11px;line-height:12px;font-weight:400;color:#000;letter-spacing:-0.223px;">NomCsaLig</div>
<div style="left:504.00px;top:426px;font-size:11px;line-height:12px;font-weight:400;color:#000;letter-spacing:-0.271px;">Composants nomenclature de pointeur</div>
<div style="left:800px;top:425px;width:13px;height:13px;background:#fff;box-sizing:border-box;border:1.5px solid #333"></div>
<div style="left:431.00px;top:442px;font-size:11px;line-height:12px;font-weight:400;color:#000;letter-spacing:-0.271px;">NomDom</div>
<div style="left:504.00px;top:442px;font-size:11px;line-height:12px;font-weight:400;color:#000;letter-spacing:-0.255px;">Affichage Propriétés sur Nomenclature</div>
<div style="left:800px;top:441px;width:13px;height:13px;background:#fff;box-sizing:border-box;border:1.5px solid #333"></div>
<div style="left:431.00px;top:458px;font-size:11px;line-height:12px;font-weight:400;color:#000;letter-spacing:-0.209px;">NomITLig</div>
<div style="left:504.00px;top:458px;font-size:11px;line-height:12px;font-weight:400;color:#000;letter-spacing:-0.254px;">IT nomenclature de pointeur</div>
<div style="left:800px;top:457px;width:13px;height:13px;background:#fff;box-sizing:border-box;border:1.5px solid #333"></div>
<div style="left:431.00px;top:474px;font-size:11px;line-height:12px;font-weight:400;color:#000;letter-spacing:-0.217px;">NomITs</div>
<div style="left:504.00px;top:474px;font-size:11px;line-height:12px;font-weight:400;color:#000;letter-spacing:-0.246px;">Affichage des ITs</div>
<div style="left:800px;top:473px;width:13px;height:13px;background:#fff;box-sizing:border-box;border:1.5px solid #333"></div>
<div style="left:431.00px;top:490px;font-size:11px;line-height:12px;font-weight:400;color:#000;letter-spacing:-0.264px;">NomVBA</div>
<div style="left:504.00px;top:490px;font-size:11px;line-height:12px;font-weight:400;color:#000;letter-spacing:-0.255px;">Affichage VBA sur Nomenclature (Détai Pointeur)</div>
<div style="left:800px;top:489px;width:13px;height:13px;background:#fff;box-sizing:border-box;border:1.5px solid #333"></div>
<div style="left:431.00px;top:506px;font-size:11px;line-height:12px;font-weight:400;color:#000;letter-spacing:-0.178px;">StkDisArt</div>
<div style="left:504.00px;top:506px;font-size:11px;line-height:12px;font-weight:400;color:#000;letter-spacing:-0.220px;">Disponibilité Article</div>
<div style="left:800px;top:505px;width:13px;height:13px;background:#fff;box-sizing:border-box;border:1.5px solid #333"></div>
<div style="left:431.00px;top:522px;font-size:11px;line-height:12px;font-weight:400;color:#000;letter-spacing:-0.226px;">TdbChaL</div>
<div style="left:504.00px;top:522px;font-size:11px;line-height:12px;font-weight:400;color:#000;letter-spacing:-0.232px;">Tableur planification</div>
<div style="left:800px;top:521px;width:13px;height:13px;background:#fff;box-sizing:border-box;border:1.5px solid #333"></div>
<div style="left:800px;top:536px;width:13px;height:2px;background:#333;"></div>
<div style="left:396px;top:423px;width:32px;height:16px;background:#fdd18b;box-shadow:inset 0 1px 0 #f1a043"></div>
<div style="left:429px;top:422px;width:74px;height:19px;box-sizing:border-box;border:2px solid #151515;box-shadow:inset 0 0 0 1px #fff"></div>
<div style="left:917px;top:198px;width:16px;height:340px;background:#7497c2;"></div>
<div style="left:917px;top:198px;width:16px;height:16px;background:#c6d8f0;box-sizing:border-box;border:1px solid #7497c2;box-shadow:inset 1px 1px 0 #e0ebf8"></div>
<svg style="left:919px;top:202px;" width="12" height="7" viewBox="0 0 12 7"><path d="M1 6 L6 1 L11 6 Z" fill="#3a4870"/></svg>
<div style="left:917px;top:372px;width:16px;height:131px;box-sizing:border-box;border:1px solid #4b6190;background:linear-gradient(90deg,#dbe7f6 0,#dbe7f6 50%,#c3d6f1 50%)"></div>
<div style="left:917px;top:522px;width:16px;height:16px;background:#c6d8f0;box-sizing:border-box;border:1px solid #7497c2;box-shadow:inset 1px 1px 0 #e0ebf8"></div>
<svg style="left:919px;top:526px;" width="12" height="7" viewBox="0 0 12 7"><path d="M1 1 L6 6 L11 1 Z" fill="#3a4870"/></svg>
<div style="left:935px;top:196px;width:4px;height:375px;background:#9a9a9a;box-shadow:inset 1px 0 0 #d0d0d0"></div>
<div style="left:401px;top:545px;width:66px;height:20px;background:#cdcdcd;box-sizing:border-box;border:1px solid #c2c2c2"></div>
<svg style="left:410px;top:549px;" width="11" height="11" viewBox="0 0 11 11"><path d="M1.5 1.5 L9.5 9.5 M9.5 1.5 L1.5 9.5" stroke="#a8a8a8" stroke-width="2.4"/></svg>
<div style="left:428.00px;top:549px;font-size:11px;line-height:12px;font-weight:400;color:#808080;letter-spacing:-0.742px;">Fermer</div>
<svg style="left:866px;top:438px;" width="13" height="20" viewBox="0 0 13 20"><path d="M1 1 V16 L4.5 12.5 L7.5 19 L10 18 L7 11.5 H12 Z" fill="#fff" stroke="#222" stroke-width="1"/></svg>
<div style="left:939px;top:196px;width:691px;height:375px;background:linear-gradient(#fafafa,#f0f0f0 24px,#f0f0f0)"></div>
<div style="left:940px;top:219px;width:688px;height:320px;box-sizing:border-box;border:1px solid #a0a0a0;border-right-color:#a0a0a0"></div>
<svg style="left:944px;top:199px;" width="196" height="22" viewBox="0 0 196 22"><defs><linearGradient id="tg" x1="0" y1="0" x2="0" y2="1"><stop offset="0" stop-color="#fbfbfb"/><stop offset="1" stop-color="#f0f0f0"/></linearGradient></defs>
<path d="M100 6.5 Q103 1.5 107 1.5 H181 Q183 1.5 184.5 4 L193.5 20.5" fill="url(#tg)" stroke="#a0a0a0" stroke-width="1"/>
<rect x="95" y="19.5" width="98" height="3" fill="#f0f0f0"/>
<path d="M1.5 20.5 L11 4 Q12.5 1.5 15 1.5 H93.5 Q94.5 1.5 95.5 3 L104.5 20.5" fill="url(#tg)" stroke="#a0a0a0" stroke-width="1"/>
<rect x="2" y="20" width="102" height="2" fill="#f0f0f0"/></svg>
<svg style="left:957px;top:201px;" width="14" height="18" viewBox="0 0 14 18"><path d="M5 1 H10 L13 4 V14 H5 Z" fill="#f3ecd8" stroke="#b8b0a0" stroke-width="0.8"/><path d="M1 5 H6 L9 8 V17.5 H1 Z" fill="#f6f0de" stroke="#b8b0a0" stroke-width="0.8"/></svg>
<div style="left:975.00px;top:203px;font-size:12px;line-height:14px;font-weight:700;color:#000;letter-spacing:-0.125px;">Généralités</div>
<svg style="left:1048px;top:203px;" width="17" height="11" viewBox="0 0 17 11"><rect x="0.5" y="1.5" width="15" height="8" rx="2" fill="#cfcfcf" stroke="#777" stroke-width="0.8"/><circle cx="11" cy="5.5" r="2.3" fill="#333"/><path d="M1 3 H9" stroke="#fff" stroke-width="0.8"/></svg>
<div style="left:1067.00px;top:203px;font-size:12px;line-height:14px;font-weight:400;color:#1a1a5e;letter-spacing:-0.732px;">Qui, Quand?</div>
<div style="left:988.00px;top:227px;font-size:11px;line-height:12px;font-weight:400;color:#000;letter-spacing:-0.196px;">Référence</div>
<div style="left:980.00px;top:247px;font-size:11px;line-height:12px;font-weight:400;color:#000;letter-spacing:-0.099px;">Désignation</div>
<div style="left:990.00px;top:267px;font-size:11px;line-height:12px;font-weight:400;color:#000;letter-spacing:-0.314px;">Propriétés</div>
<div style="left:975.00px;top:293px;font-size:11px;line-height:12px;font-weight:400;color:#000;letter-spacing:-0.366px;">Commentaire</div>
<div style="left:972.00px;top:410px;font-size:11px;line-height:12px;font-weight:400;color:#000;letter-spacing:-0.261px;">Méthode MAJ</div>
<div style="left:1050px;top:224px;width:90px;height:17px;box-sizing:border-box;border:1px solid #7a7a7a;background:#fff"></div>
<div style="left:1053.00px;top:227px;font-size:11px;line-height:12px;font-weight:400;color:#000;letter-spacing:-0.2px">NomCsaLig</div>
<div style="left:1050px;top:243px;width:465px;height:17px;box-sizing:border-box;border:1px solid #7a7a7a;background:#fff"></div>
<div style="left:1053.00px;top:246px;font-size:11px;line-height:12px;font-weight:400;color:#000;letter-spacing:-0.2px">Composants nomenclature de pointeur</div>
<div style="left:1051px;top:263px;width:24px;height:24px;background:#e1e1e1;box-sizing:border-box;border:2px solid #b9b9b9"></div>
<svg style="left:1051px;top:263px;" width="24" height="24" viewBox="0 0 24 24"><path d="M12.5 4 H19.5" stroke="#000" stroke-width="2.6" stroke-linecap="round"/><path d="M12 5 L5.3 12" stroke="#000" stroke-width="1.1"/><path d="M17.6 5 V13.2 Q17.6 14.6 16.3 14.6 Q15 14.6 15 13.2 V9.6 L10.5 15.5" stroke="#000" stroke-width="1.1" fill="none"/><path d="M13.5 6.5 L8.5 14" stroke="#000" stroke-width="1" stroke-dasharray="1.2 1"/><path d="M5.5 12.5 L7.5 13.5" stroke="#000" stroke-width="1"/><ellipse cx="8.2" cy="16.8" rx="4" ry="1.9" fill="#000"/></svg>
<div style="left:1050px;top:290px;width:465px;height:115px;box-sizing:border-box;border:1px solid #7a7a7a;background:#fff"></div>
<div style="left:1497px;top:291px;width:17px;height:113px;background:#f0f0f0;"></div>
<svg style="left:1500px;top:297px;" width="10" height="6" viewBox="0 0 10 6"><path d="M1 5 L5 1 L9 5" stroke="#c0c0c0" stroke-width="1.3" fill="none"/></svg>
<svg style="left:1500px;top:391px;" width="10" height="6" viewBox="0 0 10 6"><path d="M1 1 L5 5 L9 1" stroke="#c0c0c0" stroke-width="1.3" fill="none"/></svg>
<div style="left:1050px;top:407px;width:128px;height:17px;box-sizing:border-box;border:1px solid #7a7a7a;background:#fff"></div>
<div style="left:1181px;top:408px;width:14px;height:14px;background:#fff;box-sizing:border-box;border:1px solid #9a9a9a"></div>
<div style="left:1184.00px;top:409px;font-size:11px;line-height:12px;font-weight:700;color:#000;">?</div>
<div style="left:946px;top:545px;width:70px;height:20px;box-sizing:border-box;border:1px solid #adadad;background:#e1e1e1"></div>
<svg style="left:957px;top:550px;" width="12" height="10" viewBox="0 0 12 10"><path d="M1 5 L4.5 8.5 L11 1.5" stroke="#2aa8b8" stroke-width="2.4" fill="none"/></svg>
<div style="left:974.00px;top:549px;font-size:11px;line-height:12px;font-weight:400;color:#000;letter-spacing:-0.062px;">Valider</div>
<div style="left:1020px;top:545px;width:70px;height:20px;box-sizing:border-box;border:1px solid #adadad;background:#e1e1e1"></div>
<svg style="left:1029px;top:549px;" width="12" height="12" viewBox="0 0 12 12"><path d="M1.5 1.5 L10.5 10.5 M10.5 1.5 L1.5 10.5" stroke="#e8482a" stroke-width="2.6"/></svg>
<div style="left:1046.00px;top:549px;font-size:11px;line-height:12px;font-weight:400;color:#000;letter-spacing:0.011px;">Annuler</div>
<div style="left:5px;top:572px;width:1625px;height:23px;background:#e8eef3;"></div>
<div style="left:1614px;top:586px;width:2px;height:2px;background:#4a80d0;box-shadow:1px 1px 0 #fff"></div>
<div style="left:1618px;top:586px;width:2px;height:2px;background:#4a80d0;box-shadow:1px 1px 0 #fff"></div>
<div style="left:1622px;top:586px;width:2px;height:2px;background:#4a80d0;box-shadow:1px 1px 0 #fff"></div>
<div style="left:1618px;top:582px;width:2px;height:2px;background:#4a80d0;box-shadow:1px 1px 0 #fff"></div>
<div style="left:1622px;top:582px;width:2px;height:2px;background:#4a80d0;box-shadow:1px 1px 0 #fff"></div>
<div style="left:1622px;top:578px;width:2px;height:2px;background:#4a80d0;box-shadow:1px 1px 0 #fff"></div>
<svg style="left:72px;top:204px;" width="15" height="14" viewBox="0 0 15 14"><path d="M7.5 0.5 C3 0.5 0.5 3.5 0.5 7 C0.5 10.5 3 13.5 6.5 13.5 C8 13.5 8 12 7.5 11 C7 10 7.5 9 9 9 H11 C13 9 14.5 7.5 14.5 5.5 C14.5 2.5 11.5 0.5 7.5 0.5 Z" fill="#474a5a"/><circle cx="4" cy="7" r="1.1" fill="#fff"/><circle cx="5" cy="3.8" r="1.1" fill="#fff"/><circle cx="8.3" cy="2.8" r="1.1" fill="#fff"/><circle cx="11.2" cy="4.5" r="1.1" fill="#fff"/></svg>
<svg style="left:70px;top:229px;" width="16" height="13" viewBox="0 0 16 13"><rect x="6" y="0" width="4" height="3.5" rx="0.6" fill="#474a5a"/><rect x="0" y="8.5" width="4.5" height="4.5" rx="1" fill="#474a5a"/><rect x="5.75" y="8.5" width="4.5" height="4.5" rx="1" fill="#474a5a"/><rect x="11.5" y="8.5" width="4.5" height="4.5" rx="1" fill="#474a5a"/><path d="M8 3 V9 M2.25 9 V6 H13.75 V9" stroke="#474a5a" stroke-width="1.4" fill="none"/></svg>
<svg style="left:72px;top:253px;" width="14" height="13" viewBox="0 0 14 13"><rect x="1" y="1" width="12" height="11" rx="1" stroke="#474a5a" stroke-width="2" fill="none"/><path d="M1 2.5 H13" stroke="#474a5a" stroke-width="3"/><path d="M7 2 V12" stroke="#474a5a" stroke-width="1.8"/></svg>
<svg style="left:71px;top:276px;" width="14" height="14" viewBox="0 0 14 14"><path d="M13.48 8.26 L12.47 10.69 L10.58 10.49 L10.49 10.58 L10.69 12.47 L8.26 13.48 L7.06 12.00 L6.94 12.00 L5.74 13.48 L3.31 12.47 L3.51 10.58 L3.42 10.49 L1.53 10.69 L0.52 8.26 L2.00 7.06 L2.00 6.94 L0.52 5.74 L1.53 3.31 L3.42 3.51 L3.51 3.42 L3.31 1.53 L5.74 0.52 L6.94 2.00 L7.06 2.00 L8.26 0.52 L10.69 1.53 L10.49 3.42 L10.58 3.51 L12.47 3.31 L13.48 5.74 L12.00 6.94 L12.00 7.06 Z" stroke="#474a5a" stroke-width="1.1" fill="none" stroke-linejoin="round"/><circle cx="7" cy="7" r="2.2" stroke="#474a5a" stroke-width="1.1" fill="none"/></svg>
<svg style="left:72px;top:300px;" width="14" height="14" viewBox="0 0 14 14"><path d="M1.5 1 L3 0.5 L12.5 10 L13.5 13.5 L10 12.5 L0.5 3 Z" fill="#474a5a"/><path d="M2 12 L8 6" stroke="#474a5a" stroke-width="3.2" stroke-linecap="round"/><circle cx="2.3" cy="11.7" r="0.8" fill="#fff"/><path d="M7.5 6.5 L9.5 4.5 C9 3 9.5 1 11.5 0.5 L12.5 0.5 L10.8 2.3 L11.7 3.3 L13.5 1.5 L13.5 2.5 C13 4.5 11 5 9.5 4.5" fill="#474a5a" stroke="#474a5a" stroke-width="1"/></svg>
<svg style="left:91px;top:323px;" width="16" height="16" viewBox="0 0 16 16"><path d="M0.8 4.6 L4.4 1 L15.4 12 L11.8 15.6 Z" fill="#474a5a"/><path d="M3.3 3.6 L5 5.3 M10.9 11.2 L12.6 12.9" stroke="#ebeff3" stroke-width="1.1"/><path d="M0.8 15.5 L1.9 10.3 L10.3 1.9 L14.3 5.9 L5.9 14.3 Z" fill="#474a5a" stroke="#ebeff3" stroke-width="1.1" stroke-linejoin="round"/><path d="M11.6 0.9 L12.3 0.2 Q13.1 -0.4 13.9 0.4 L15.8 2.3 Q16.4 3 15.8 3.8 L15.1 4.5 Z" fill="#474a5a"/></svg>
<svg style="left:93px;top:347px;" width="13" height="15" viewBox="0 0 13 15"><path d="M3 7 V4.5 A3.5 3.5 0 0 1 10 4.5 V7" stroke="#474a5a" stroke-width="2" fill="none"/><rect x="0.5" y="6.5" width="12" height="8" rx="1.5" fill="#474a5a"/></svg>
<svg style="left:93px;top:371px;" width="12" height="15" viewBox="0 0 12 15"><path d="M0.5 1.5 Q0.5 0.5 1.5 0.5 H7 L11.5 5 V13.5 Q11.5 14.5 10.5 14.5 H1.5 Q0.5 14.5 0.5 13.5 Z" fill="#474a5a"/><path d="M7 0.5 V5 H11.5" fill="#ebeff3"/><path d="M3 8.5 H9 M3 11 H9" stroke="#ebeff3" stroke-width="1.1"/></svg>
<svg style="left:92px;top:395px;" width="14" height="15" viewBox="0 0 14 15"><path d="M1.5 7 V5.5 Q1.5 3.5 3.5 3.5 H11.5 M9 1 L11.5 3.5 L9 6" stroke="#474a5a" stroke-width="1.7" fill="none"/><path d="M12.5 8 V9.5 Q12.5 11.5 10.5 11.5 H2.5 M5 9 L2.5 11.5 L5 14" stroke="#474a5a" stroke-width="1.7" fill="none"/></svg>
<svg style="left:92px;top:420px;" width="14" height="13" viewBox="0 0 14 13"><path d="M7 0.5 C10.8 0.5 13.5 2.8 13.5 5.7 C13.5 8.6 10.8 10.9 7 10.9 C6 10.9 5 10.7 4.2 10.4 L1 12.5 L2 9.3 C1 8.3 0.5 7.1 0.5 5.7 C0.5 2.8 3.2 0.5 7 0.5 Z" fill="#474a5a"/><circle cx="4" cy="5.7" r="0.9" fill="#ebeff3"/><circle cx="7" cy="5.7" r="0.9" fill="#ebeff3"/><circle cx="10" cy="5.7" r="0.9" fill="#ebeff3"/></svg>
<svg style="left:91px;top:443px;" width="16" height="15" viewBox="0 0 16 15"><g transform="scale(1.1)"><path d="M6 0.8 H1.8 Q0.8 0.8 0.8 1.8 V11.2 Q0.8 12.2 1.8 12.2 H8.2 Q9.2 12.2 9.2 11.2 V9.8" stroke="#474a5a" stroke-width="1.3" fill="none"/><circle cx="8.5" cy="2.6" r="1.4" stroke="#474a5a" stroke-width="1.2" fill="none"/><path d="M7.6 3.9 L4.2 10.3 M9.4 3.9 L12.6 9.8" stroke="#474a5a" stroke-width="1.7" fill="none" stroke-linecap="round"/><path d="M5 7.2 L12.2 6.6" stroke="#474a5a" stroke-width="1.1"/></g></svg>
<svg style="left:91px;top:469px;" width="17" height="12" viewBox="0 0 17 12"><path d="M4 0 H17 L12 6 V12 L9 10 V6 Z" fill="#474a5a"/><path d="M0 0 H3.5 L8 5 V9 L6.5 8 V6 Z" fill="#474a5a"/></svg>
<svg style="left:94px;top:492px;" width="10" height="12" viewBox="0 0 10 12"><path d="M1.2 12 V1 H5 Q8.8 1 8.8 4.5 Q8.8 8 5 8 H1.2" stroke="#474a5a" stroke-width="1.6" fill="none"/></svg>
<svg style="left:92px;top:518px;" width="14" height="10" viewBox="0 0 14 10"><path d="M1 5 L4.7 8.7 L13 0.8" stroke="#474a5a" stroke-width="2" fill="none"/></svg>
<svg style="left:92px;top:541px;" width="14" height="13" viewBox="0 0 14 13"><path d="M11 3.2 A5.3 5.3 0 1 0 11.5 9.5" stroke="#474a5a" stroke-width="1.8" fill="none"/><path d="M8 0.5 H13 V5.5 Z" fill="#474a5a"/></svg>
<svg style="left:71px;top:564px;" width="16" height="8" viewBox="0 0 16 8"><circle cx="8" cy="8" r="7.5" fill="#474a5a"/><path d="M4 6 L6 3 L8 6 L10 3 L12 6" stroke="#fff" stroke-width="1" fill="none"/></svg>
<div style="left:5px;top:571px;width:1625px;height:1px;background:#fff;"></div>
<div style="left:1630px;top:55px;width:1px;height:516px;background:#f2f2f2;"></div>
<div style="left:5px;top:572px;width:1625px;height:23px;background:#e8eef3;"></div>
<div style="left:1614px;top:586px;width:2px;height:2px;background:#4a80d0;box-shadow:1px 1px 0 #fff"></div>
<div style="left:1618px;top:586px;width:2px;height:2px;background:#4a80d0;box-shadow:1px 1px 0 #fff"></div>
<div style="left:1622px;top:586px;width:2px;height:2px;background:#4a80d0;box-shadow:1px 1px 0 #fff"></div>
<div style="left:1618px;top:582px;width:2px;height:2px;background:#4a80d0;box-shadow:1px 1px 0 #fff"></div>
<div style="left:1622px;top:582px;width:2px;height:2px;background:#4a80d0;box-shadow:1px 1px 0 #fff"></div>
<div style="left:1622px;top:578px;width:2px;height:2px;background:#4a80d0;box-shadow:1px 1px 0 #fff"></div>
</body></html>
